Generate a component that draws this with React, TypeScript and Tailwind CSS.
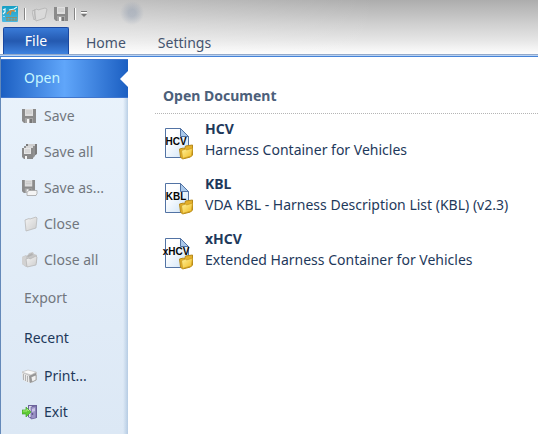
import type { ReactNode } from "react";

function Floppy() {
  return (
    <g>
      <path d="M0 0h14v14H2l-2-2z" fill="#8b8b8b" />
      <path d="M3 0h8v7H3z" fill="#dedede" />
      <path d="M4 2h6M4 4h6" stroke="#c4c4c4" />
      <path d="M3 9h8v5H3z" fill="#a5a5a5" />
      <path d="M5 10h2v4H5z" fill="#f5f5f5" />
      <path d="M8 10h2v4H8z" fill="#777" />
    </g>
  );
}

function Icon({ children }: { children: ReactNode }) {
  return (
    <svg width="16" height="16" viewBox="0 0 16 16" className="shrink-0" aria-hidden="true">
      <defs>
        <linearGradient id="paper" x2="1" y2="1">
          <stop stopColor="#f4f4f4" />
          <stop offset="1" stopColor="#cdcdcd" />
        </linearGradient>
      </defs>
      {children}
    </svg>
  );
}

const SaveIcon = () => (
  <Icon>
    <g transform="translate(0 1)"><Floppy /></g>
  </Icon>
);

const SaveAllIcon = () => (
  <Icon>
    <path d="M4 0h11v10l-3 2H4z" fill="#7c7c7c" />
    <path d="M6 0h7v4H6z" fill="#cfcfcf" />
    <path d="M2 2h11v10l-2 2H2z" fill="#929292" />
    <path d="M4 2h7v4H4z" fill="#d8d8d8" />
    <path d="M0 4h11v11H2l-2-2z" fill="#8a8a8a" />
    <path d="M2 4h7v6H2z" fill="#e6e6e6" />
    <path d="M3 6h5M3 8h5" stroke="#c8c8c8" />
    <path d="M3 12h2v3H3z" fill="#f5f5f5" />
  </Icon>
);

const SaveAsIcon = () => (
  <Icon>
    <g transform="scale(.93)"><Floppy /></g>
    <path d="M5 12l2-1.500h8v3l-1 2H5z" fill="#f4f4f4" stroke="#a4a4a4" strokeWidth=".8" />
  </Icon>
);

const CloseIcon = () => (
  <Icon>
    <path d="M3 4l4-1.500 1 .5 6-2 1 1-1 10-10 3z" fill="url(#paper)" stroke="#b9b9b9" strokeWidth=".8" />
  </Icon>
);

const CloseAllIcon = () => (
  <Icon>
    <path d="M0 5l4-2 1 1 2-3 4-1 1 2 3 1v8L4 15l-4-3z" fill="#c6c6c6" />
    <path d="M0 5l4-1v10l-4-2z" fill="#d2d2d2" />
    <path d="M5 4l5-3 1 2-5 2z" fill="#b2b2b2" />
    <path d="M4 7l3-1 1 1 6-3 1 1-1 8-9 2z" fill="url(#paper)" stroke="#b8b8b8" strokeWidth=".8" />
  </Icon>
);

const PrintIcon = () => (
  <Icon>
    <path d="M0 4l5-2 10 2v8l-6 3-8-3z" fill="#cacaca" />
    <path d="M0 4l6-2 8 2-5 3z" fill="#fafafa" stroke="#bbb" strokeWidth=".5" />
    <path d="M0 5l7 3v7l-6-3z" fill="#ececec" />
    <path d="M1.500 6v6M3.500 7v6M5.500 8v6" stroke="#b3b3b3" />
    <path d="M7 8l7-3v7l-6 3z" fill="#979797" />
    <path d="M9 9l5-2v5l-4 2z" fill="#f1f1f1" stroke="#888" strokeWidth=".6" />
  </Icon>
);

const ExitIcon = () => (
  <Icon>
    <path d="M6 1h9v13h-2l-3 1-4-2z" fill="#6c639c" />
    <path d="M7 2h3v11H7z" fill="#dcdcec" />
    <path d="M9 3l5-1v12l-5 1z" fill="#9b92c6" stroke="#6a6199" strokeWidth=".6" />
    <path d="M10 5l3-1v3l-3 1z" fill="#c9c2e5" />
    <circle cx="10.500" cy="10" r=".8" fill="#443a70" />
    <path d="M0 6h4V3l5 5-5 5v-3H0z" fill="#5fcb34" stroke="#45a52b" strokeWidth=".7" />
    <path d="M1 7h4V5l2 2" fill="none" stroke="#a5ec78" />
  </Icon>
);

function DocumentIcon({ label }: { label: string }) {
  return (
    <svg width="32" height="32" viewBox="0 0 32 32" className="mt-[10px] shrink-0 overflow-visible" aria-hidden="true">
      <defs>
        <linearGradient id="sheet" x2="1" y2="1">
          <stop offset=".3" stopColor="#ffffff" />
          <stop offset="1" stopColor="#c9e0f6" />
        </linearGradient>
        <linearGradient id="gold" x2="1" y2="1">
          <stop stopColor="#fff3a0" />
          <stop offset="1" stopColor="#f0b91c" />
        </linearGradient>
      </defs>
      <path d="M2.500 .5h15l8 8v21h-23z" fill="url(#sheet)" stroke="#5273a4" />
      <path d="M17.500 .5v8h8z" fill="#a9c8ea" stroke="#5273a4" />
      <text x="13" y="17" textAnchor="middle" fontSize="10" fontWeight="700" fill="#050505" className="font-['Liberation_Sans',sans-serif]">{label}</text>
      <path d="M16.500 21l4-1 1 1 1-3 7-1v10l-2 2-8 2-2-2z" fill="#e5b02a" stroke="#b5891a" />
      <path d="M18.500 22.500l4-1.500 1 1 6-2-1 8-9 2.500z" fill="url(#gold)" stroke="#c99a20" strokeWidth=".8" />
    </svg>
  );
}

function AppLogo() {
  return (
    <svg width="16" height="16" viewBox="0 0 16 16" aria-hidden="true">
      <defs>
        <linearGradient id="logo" x2="0" y2="1">
          <stop stopColor="#159fc4" />
          <stop offset="1" stopColor="#4cb9e2" />
        </linearGradient>
      </defs>
      <rect width="16" height="16" rx="1" fill="url(#logo)" />
      <path d="M1 4l2-1v3l-2 2M2 10v1M7 4l5-1 3-2M13 4v2" fill="none" stroke="#e3f8fc" strokeWidth="1.200" />
      <path d="M5 8c1-2 4-4 8-3M9 5l-1 4" fill="none" stroke="#d78635" strokeWidth="1.400" />
      <path d="M4 11.500h11M4 14h11M5 11v4M8 11v4M11 11v4M14 11v4" stroke="#9b8a5e" strokeWidth=".8" />
    </svg>
  );
}

type MenuEntry = { label: string; icon?: ReactNode; disabled?: boolean };

const entries: MenuEntry[] = [
  { label: "Save", icon: <SaveIcon />, disabled: true },
  { label: "Save all", icon: <SaveAllIcon />, disabled: true },
  { label: "Save as...", icon: <SaveAsIcon />, disabled: true },
  { label: "Close", icon: <CloseIcon />, disabled: true },
  { label: "Close all", icon: <CloseAllIcon />, disabled: true },
  { label: "Export", disabled: true },
  { label: "Recent" },
  { label: "Print...", icon: <PrintIcon /> },
  { label: "Exit", icon: <ExitIcon /> },
];

const documents = [
  { name: "HCV", description: "Harness Container for Vehicles" },
  { name: "KBL", description: "VDA KBL - Harness Description List (KBL) (v2.3)" },
  { name: "xHCV", description: "Extended Harness Container for Vehicles" },
];

export default function App() {
  return (
    <div className="flex min-h-screen flex-col bg-white font-['Noto_Sans','Open_Sans',sans-serif] text-sm text-[#1e395b]">
      <header className="bg-[radial-gradient(circle_12px_at_132px_13px,#7b8ca659_30%,#7b8ca600),linear-gradient(to_right,#ffffff59,#ffffff00_70%),linear-gradient(to_bottom,#adadad,#d0d0d0_45%,#e6e6e6_75%,#fdfdfd)]">
        <div className="flex h-[27px] items-center pl-0.5">
          <AppLogo />
          <span className="ml-1.5 h-3 w-0.5 border-l border-[#858585] bg-white" />
          <button aria-label="Open" className="ml-1.5">
            <Icon>
              <path d="M0 5l3-1v9l-1 1zM2 4l3-1 1 1 7-2 2 1-2 9-9 3z" fill="#dadada" stroke="#b2b2b2" strokeWidth=".8" />
            </Icon>
          </button>
          <button aria-label="Save" className="ml-1.5"><SaveIcon /></button>
          <span className="ml-1 h-3 w-0.5 border-l border-[#858585] bg-white" />
          <button aria-label="Customize toolbar" className="ml-1">
            <svg width="8" height="8" viewBox="0 0 8 8" aria-hidden="true">
              <path d="M1 1.500h6" stroke="#777" />
              <path d="M1 2.500h6" stroke="#fff" />
              <path d="M1 4h6L4 7z" fill="#777" />
            </svg>
          </button>
        </div>
        <nav className="flex h-[27px] pl-[3px]">
          <button className="w-[66px] rounded-t-xs border border-b-0 border-[#1b48a0] bg-linear-to-b from-[#3a7bd8] via-[#2459b0] to-[#3f83e0] text-white">File</button>
          <button className="ml-[17px] pt-1 text-[#44546f]">Home</button>
          <button className="ml-8 pt-1 text-[#44546f]">Settings</button>
        </nav>
      </header>
      <div className="h-[3px] border-t border-b border-t-[#93a9ca] border-b-[#4583d8] bg-[#b9d3f4]" />

      <div className="flex flex-1 border-l border-[#6489b9] pt-0.5">
        <aside className="flex w-[127px] shrink-0 flex-col bg-[linear-gradient(to_right,#9bb8d700_calc(100%-5px),#9bb8d799),linear-gradient(to_bottom,#eaf3fc,#dce8f5)]">
          <button className="relative h-[39px] border-y border-[#3e75ce] bg-linear-to-r from-[#1b5fc2] via-[#60a6fa] to-[#1b5fc2] pb-0.5 pl-[23px] text-left text-[#c5f7ff]">
            Open
            <svg width="8" height="16" viewBox="0 0 8 16" className="absolute top-[11px] right-0" aria-hidden="true"><path d="M8 0v16L0 8z" fill="#fff" /></svg>
          </button>
          {entries.map((entry) => (
            <button
              key={entry.label}
              disabled={entry.disabled}
              className={`flex items-center text-left ${entry.icon ? "h-9 gap-[6px] pl-[21px]" : "h-10 pl-[23px]"} ${entry.disabled ? "text-[#72777e]" : "text-[#1e395b]"}`}
            >
              {entry.icon}
              {entry.label}
            </button>
          ))}
        </aside>

        <main className="min-w-0 flex-1 pt-[27px] pl-[27px]">
          <h1 className="border-b border-dotted border-[#b5b5b5] pb-[7px] pl-2 text-sm font-bold text-[#4c607a]">Open Document</h1>
          <ul>
            {documents.map((doc) => (
              <li key={doc.name}>
                <button className="flex h-[55px] w-full items-start gap-[10px] pt-1 pl-2 text-left">
                  <DocumentIcon label={doc.name} />
                  <span className="flex flex-col whitespace-nowrap leading-[21px]">
                    <strong>{doc.name}</strong>
                    <span>{doc.description}</span>
                  </span>
                </button>
              </li>
            ))}
          </ul>
        </main>
      </div>
    </div>
  );
}
